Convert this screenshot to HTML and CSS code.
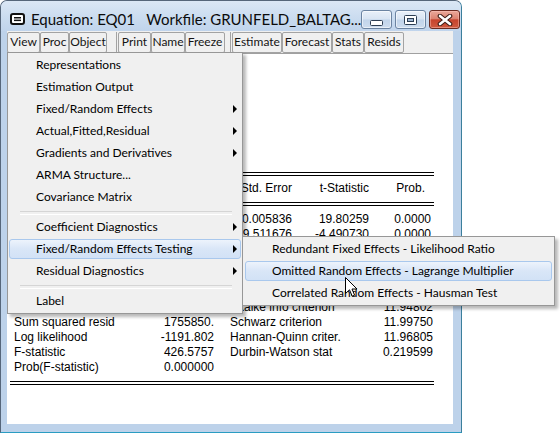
FILE: index.html
```html
<!DOCTYPE html>
<html>
<head>
<meta charset="utf-8">
<title>Equation: EQ01</title>
<link rel="stylesheet" href="styles.css">
</head>
<body>
<div class="window">
  <div class="titlebar">
    <svg class="sysicon" width="15" height="12" viewBox="0 0 15 12">
      <rect x="1" y="1" width="13" height="10" rx="2" fill="#fff" stroke="#111" stroke-width="2"/>
      <rect x="4" y="4" width="7" height="1.5" fill="#111"/>
      <rect x="4" y="6.6" width="7" height="1.5" fill="#111"/>
    </svg>
    <span class="title">Equation: EQ01   Workfile: GRUNFELD_BALTAG...</span>
    <div class="capbtns">
      <span class="cap"><svg width="13" height="6" viewBox="0 0 13 6"><rect x="0.5" y="0.5" width="12" height="5" rx="1" fill="#fff" stroke="#2c3d52"/></svg></span>
      <span class="cap"><svg width="13" height="10" viewBox="0 0 13 10"><rect x="0.5" y="0.5" width="12" height="9" rx="1" fill="#fff" stroke="#2c3d52"/><rect x="3.5" y="3.5" width="6" height="3" fill="#9fb6d2" stroke="#2c3d52"/></svg></span>
      <span class="cap close"><svg width="16" height="12" viewBox="0 0 16 12"><path d="M3 2 L13 10 M13 2 L3 10" stroke="#3a1a14" stroke-width="4.6" stroke-linecap="round"/><path d="M3 2 L13 10 M13 2 L3 10" stroke="#fff" stroke-width="2.6" stroke-linecap="round"/></svg></span>
    </div>
  </div>
  <div class="toolbar">
    <span class="tb w33">View</span><span class="tb w29">Proc</span><span class="tb w38">Object</span>
    <span class="tsep s1"></span>
    <span class="tb w33">Print</span><span class="tb w34">Name</span><span class="tb w40">Freeze</span>
    <span class="tsep s2"></span>
    <span class="tb w50">Estimate</span><span class="tb w50">Forecast</span><span class="tb w32">Stats</span><span class="tb w40">Resids</span>
  </div>
  <div class="content">
    <div class="output">
      <div class="line">Dependent Variable: I</div>
      <div class="line">Method: Panel Least Squares</div>
      <div class="line">Date: 05/14/13   Time: 10:27</div>
      <div class="line">Sample: 1935 1954</div>
      <div class="line">Periods included: 20</div>
      <div class="line">Cross-sections included: 10</div>
      <div class="line">Total panel (balanced) observations: 200</div>

      <div class="dbl d1"></div>
      <div class="crow head"><span class="c1">Variable</span><span class="r">Coefficient</span><span class="r">Std. Error</span><span class="r">t-Statistic</span><span class="r prob">Prob.</span></div>
      <div class="dbl d2"></div>

      <div class="crow first"><span class="c1">F</span><span class="r">0.115562</span><span class="r">0.005836</span><span class="r">19.80259</span><span class="r">0.0000</span></div>
      <div class="crow"><span class="c1">C</span><span class="r">-42.71437</span><span class="r">9.511676</span><span class="r">-4.490730</span><span class="r">0.0000</span></div>
      <div class="crow"><span class="c1">K</span><span class="r">0.230678</span><span class="r">0.025476</span><span class="r">9.054819</span><span class="r">0.0000</span></div>

      <div class="dbl d3"></div>

      <div class="srow first"><span class="c1">R-squared</span><span class="r">0.812408</span><span class="c3">Mean dependent var</span><span class="r">145.9583</span></div>
      <div class="srow"><span class="c1">Adjusted R-squared</span><span class="r">0.810504</span><span class="c3">S.D. dependent var</span><span class="r">216.8753</span></div>
      <div class="srow"><span class="c1">S.E. of regression</span><span class="r">94.40840</span><span class="c3">Akaike info criterion</span><span class="r">11.94802</span></div>
      <div class="srow"><span class="c1">Sum squared resid</span><span class="r">1755850.</span><span class="c3">Schwarz criterion</span><span class="r">11.99750</span></div>
      <div class="srow"><span class="c1">Log likelihood</span><span class="r">-1191.802</span><span class="c3">Hannan-Quinn criter.</span><span class="r">11.96805</span></div>
      <div class="srow"><span class="c1">F-statistic</span><span class="r">426.5757</span><span class="c3">Durbin-Watson stat</span><span class="r">0.219599</span></div>
      <div class="srow"><span class="c1">Prob(F-statistic)</span><span class="r">0.000000</span><span class="c3"></span><span class="r"></span></div>

      <div class="dbl d4"></div>
    </div>
  </div>
</div>

<div class="menu">
  <div class="mi">Representations</div>
  <div class="mi">Estimation Output</div>
  <div class="mi sub">Fixed/Random Effects</div>
  <div class="mi sub">Actual,Fitted,Residual</div>
  <div class="mi sub">Gradients and Derivatives</div>
  <div class="mi">ARMA Structure...</div>
  <div class="mi">Covariance Matrix</div>
  <div class="sep"></div>
  <div class="mi sub">Coefficient Diagnostics</div>
  <div class="mi sub hl">Fixed/Random Effects Testing</div>
  <div class="mi sub">Residual Diagnostics</div>
  <div class="sep"></div>
  <div class="mi">Label</div>
</div>

<div class="submenu">
  <div class="mi">Redundant Fixed Effects - Likelihood Ratio</div>
  <div class="mi hl">Omitted Random Effects - Lagrange Multiplier</div>
  <div class="mi">Correlated Random Effects - Hausman Test</div>
</div>

<svg class="cursor" width="13" height="21" viewBox="0 0 13 21">
  <path d="M0.5 0.5 L0.5 16.5 L4.5 12.8 L7.2 19.2 L9.6 18.2 L7 12 L12 12 Z" fill="#fff" stroke="#000" stroke-width="1" stroke-linejoin="miter"/>
</svg>
</body>
</html>
```

FILE: styles.css
```css
* { box-sizing: border-box; }
html, body { margin: 0; padding: 0; background: #ffffff; }
body {
  width: 560px;
  height: 433px;
  position: relative;
  overflow: hidden;
  font-family: "Lato", "Noto Sans", sans-serif;
  color: #000;
}

/* ---------- window frame ---------- */
.window {
  width: 462px;
  height: 433px;
  border: 1px solid #56667a;
  border-right-color: #3b7f9c;
  border-bottom-color: #2a9cc2;
  border-radius: 7px 7px 0 0;
  background: #bdd2ea;
  display: flex;
  flex-direction: column;
}

.titlebar {
  height: 30px;
  flex: none;
  display: flex;
  align-items: flex-start;
  background: linear-gradient(#dbe7f5, #c9dbef 60%, #c0d4ec);
  border-radius: 6px 6px 0 0;
}
.sysicon { margin: 12px 0 0 9px; flex: none; }
.title {
  margin: 8px 0 0 6px;
  font-size: 15px;
  line-height: 20px;
  white-space: pre;
  color: #0b0b0b;
  flex: none;
}
.capbtns {
  margin: 9px 9px 0 auto;
  display: flex;
  gap: 3px;
}
.cap {
  width: 31px;
  height: 19px;
  border: 1px solid #6b83a1;
  border-radius: 3px;
  background: linear-gradient(#e9f0f9 0%, #d8e4f2 48%, #c1d4ea 52%, #cddcee 100%);
  box-shadow: inset 0 0 0 1px rgba(255,255,255,0.55);
  display: flex;
  align-items: center;
  justify-content: center;
}
.cap:first-child svg { margin-top: 6px; }
.cap.close {
  border-color: #6a2a20;
  background: linear-gradient(#eaa99b 0%, #dc8270 46%, #c6432d 52%, #cf5a40 100%);
  box-shadow: inset 0 0 0 1px rgba(255,200,190,0.45);
}

/* ---------- toolbar ---------- */
.toolbar {
  height: 22px;
  flex: none;
  margin: 0 8px 0 6px;
  padding-top: 1px;
  background: #f0f0f0;
  display: flex;
  align-items: flex-start;
}
.tb {
  height: 21px;
  border: 1px solid #a3a3a3;
  border-radius: 2px;
  background: #f0f0f0;
  font-size: 12px;
  line-height: 18px;
  text-align: center;
  color: #141414;
  flex: none;
}
.w29 { width: 29px; }
.w32 { width: 32px; }
.w33 { width: 33px; }
.w34 { width: 34px; }
.w38 { width: 38px; }
.w40 { width: 40px; }
.w50 { width: 50px; }
.tsep {
  width: 1px;
  height: 21px;
  background: #a3a3a3;
  flex: none;
}
.tsep.s1 { margin: 0 1px 0 9px; }
.tsep.s2 { margin: 0 1px 0 5px; }

/* ---------- content / output ---------- */
.content {
  flex: 1;
  margin: 0 8px 8px 6px;
  background: #ffffff;
  border-top: 1px solid #a0a0a0;
  padding: 2px 0 0 3px;
}
.output {
  width: 424px;
  font-family: "Liberation Sans", Arial, sans-serif;
  font-size: 12px;
  line-height: 15px;
  color: #000;
}
.line { padding-left: 4px; white-space: pre; }
.dbl {
  height: 4px;
  border-top: 1px solid #000;
  border-bottom: 1px solid #000;
}
.d1 { margin-top: 11px; }
.d2 { margin-top: 6px; }
.d3 { margin-top: 5px; }
.d4 { margin-top: 6px; }
.crow {
  display: grid;
  grid-template-columns: 114px 90px 78px 77px 62px;
  white-space: nowrap;
}
.crow.head { margin-top: 5px; }
.crow.first { margin-top: 6px; }
.srow {
  display: grid;
  grid-template-columns: 114px 90px 150px 69px;
  white-space: nowrap;
}
.srow.first { margin-top: 4px; }
.c1 { padding-left: 4px; }
.c3 { padding-left: 16px; }
.r { text-align: right; }
.prob { padding-right: 6px; }

/* ---------- menus ---------- */
.menu, .submenu {
  position: absolute;
  background: #f0f0f0;
  border: 1px solid #979797;
  display: flex;
  flex-direction: column;
  box-shadow: 3px 3px 3px rgba(0,0,0,0.28);
  font-size: 12px;
  color: #000;
}
.menu {
  left: 7px;
  top: 52px;
  width: 236px;
  padding: 1px 0;
  z-index: 2;
}
.submenu {
  left: 242px;
  top: 236px;
  width: 313px;
  padding: 1px 1px;
  z-index: 3;
}
.mi {
  position: relative;
  height: 20px;
  margin: 1px 1px;
  padding-left: 26px;
  border: 1px solid transparent;
  border-radius: 3px;
  line-height: 18px;
  white-space: nowrap;
}
.mi.hl {
  border-color: #a9c8ed;
  background: linear-gradient(#edf3fc, #d9e6f7 50%, #d2e2f6);
}
.mi.sub::after {
  content: "";
  position: absolute;
  right: 3px;
  top: 5px;
  border-left: 4px solid #000;
  border-top: 4px solid transparent;
  border-bottom: 4px solid transparent;
}
.sep {
  height: 8px;
  margin: 0 10px 0 12px;
  padding-top: 3px;
}
.sep::before {
  content: "";
  display: block;
  height: 2px;
  border-top: 1px solid #d5d5d5;
  border-bottom: 1px solid #ffffff;
}

.cursor {
  position: absolute;
  left: 345px;
  top: 277px;
  z-index: 5;
}
```
